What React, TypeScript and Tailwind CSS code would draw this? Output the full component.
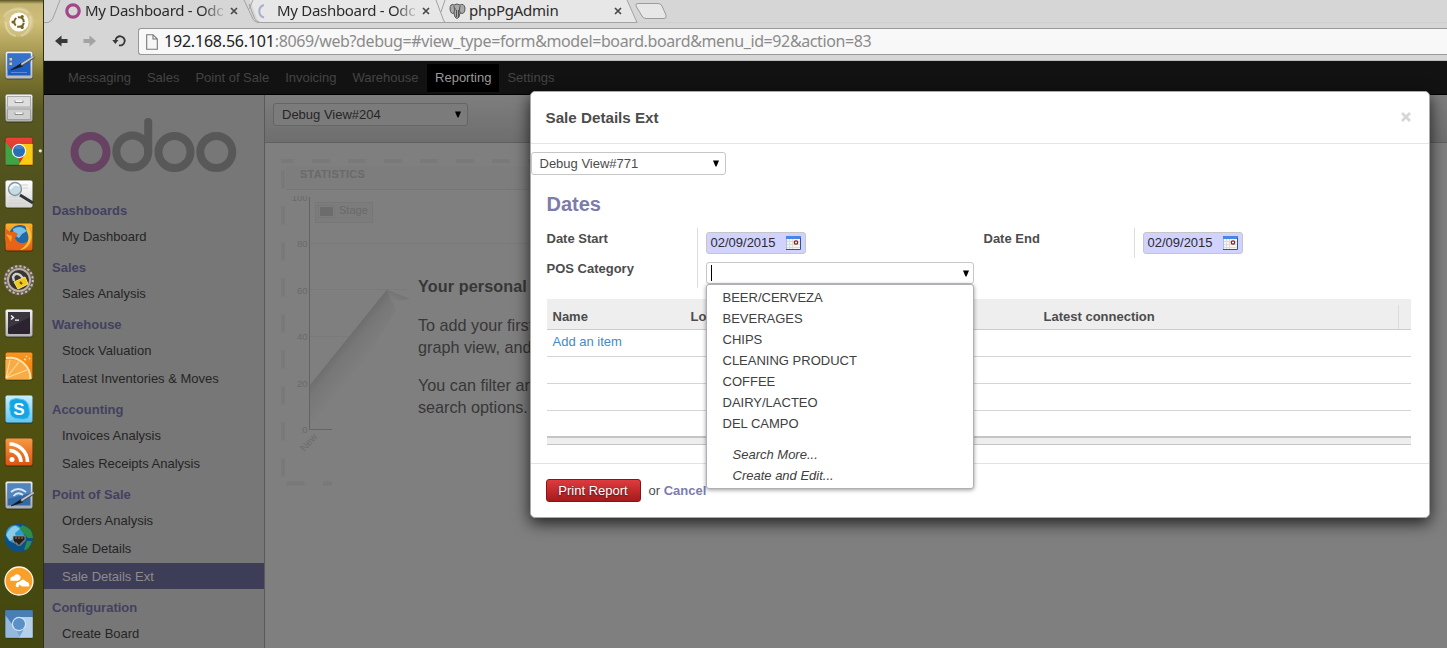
import React from 'react';

const chromeFont = "font-['Noto_Sans',sans-serif]";

function Tile({ id, from, to, stroke = '#00000055' }: { id: string; from: string; to: string; stroke?: string }) {
  return (
    <>
      <defs>
        <linearGradient id={id} x1="0" y1="0" x2="0" y2="1">
          <stop offset="0" stopColor={from} />
          <stop offset="1" stopColor={to} />
        </linearGradient>
      </defs>
      <rect x="-14" y="-13.5" width="28" height="28" rx="2.5" fill="#00000055" />
      <rect x="-13.7" y="-13.7" width="27.4" height="27.4" rx="2" fill={`url(#${id})`} stroke={stroke} strokeWidth=".6" />
    </>
  );
}

function Pen() {
  return (
    <>
      <path d="M-8 5 L2 -1.500 L4 1 Z" fill="#15181c" stroke="#15181c" strokeWidth=".6" />
      <path d="M3 -.500 L14 -7.5" stroke="#4b4f55" strokeWidth="3.2" strokeLinecap="round" />
      <path d="M3 -1 L14 -8" stroke="#c3c6ca" strokeWidth="1.8" strokeLinecap="round" />
    </>
  );
}

const launcher: React.ReactNode[] = [
  <>
    <circle r="15" fill="#e9dfb0" opacity=".3" />
    <path d="M-15 -5 C-12 -14 4 -15 9 -9 M11 -6 C14 4 8 12 2 14 M-3 14 C-10 13 -14 6 -13 0" fill="none" stroke="#f5edcf" strokeWidth="2" opacity=".35" />
    <circle r="9.6" fill="#fffef8" />
    <circle r="4.800" fill="none" stroke="#756528" strokeWidth="2" strokeDasharray="8.400 1.650" strokeDashoffset="-.800" />
    <circle cx="-6" r="1.6" fill="#756528" />
    <circle cx="3.2" cy="-5.4" r="1.6" fill="#756528" />
    <circle cx="3.2" cy="5.4" r="1.6" fill="#756528" />
  </>,
  <>
    <Tile id="pad1" from="#f3f3f3" to="#b7b9bd" />
    <rect x="-11.5" y="-11.5" width="23" height="22" fill="#1d5cc0" />
    <path d="M-11.5 -11.5 H11.5 V-3 Q0 -1 -11.5 5 Z" fill="#3472cc" />
    <path d="M-9.5 -7 h2.500 v2.500 h-2.500z M-9.5 -2.500 h2.500 v2.500 h-2.500z" fill="#e7c987" />
    <path d="M-8 7.5 h16" stroke="#5b8bd2" />
    <Pen />
  </>,
  <>
    <Tile id="cab" from="#f2f2f2" to="#b0b0b0" />
    <rect x="-11.5" y="-11.5" width="23" height="10.5" fill="#dedede" stroke="#aaaaaa" />
    <rect x="-11.5" y="1" width="23" height="10.5" fill="#cfcfcf" stroke="#a0a0a0" />
    <path d="M-4 -7.500 v2 h8 v-2 M-4 4.500 v2 h8 v-2" fill="#f5f5f5" stroke="#8d8d8d" />
  </>,
  <>
    <Tile id="chr" from="#ea4335" to="#d92b22" />
    <path d="M-13.5 -9 L-2 5 L2 13.7 H-13.5Z" fill="#3ea544" />
    <path d="M0 -7 H13.7 V13.7 H0 L6 3Z" fill="#fbcb13" />
    <circle r="7.2" fill="#f4f6f8" />
    <circle r="6" fill="#286fb4" />
    <path d="M-5 -3 A5.8 5.8 0 0 1 5 -3 Q0 -1 -5 -3" fill="#4384c0" />
    <circle cx="21.3" cy="-.2" r="1.6" fill="#e8e8dc" />
  </>,
  <>
    <Tile id="mag" from="#ffffff" to="#d4d4d4" />
    <path d="M-10 3 h12 M-10 6 h14 M-10 9 h17 M0 -9 h9 M4 -6 h5" stroke="#d0d0d0" />
    <path d="M1 1 L14 9" stroke="#303438" strokeWidth="3" />
    <circle cx="-4" cy="-5" r="6.5" fill="#c5dce6" stroke="#8a9499" strokeWidth="1.4" />
    <path d="M-9 -5 Q-5 -12 0 -8" fill="none" stroke="#f4fbff" strokeWidth="2" />
  </>,
  <>
    <Tile id="ffx" from="#fbb32d" to="#df5c12" />
    <circle cx="1" cy="-1" r="11" fill="#2269a9" />
    <path d="M-6 -8 Q2 -13 8 -6 L3 -3 L0 1 L-5 -2Z" fill="#76bfe8" />
    <path d="M-14 -9 L-9 -5 Q-5 -6 -1 -3 L-4 1 Q-2 7 5 6 Q10 5 11 0 Q10 13 -3 13 Q-12 12 -14 2Z" fill="#e66318" />
    <path d="M6 -13 Q16 -4 11 6 Q7 13 1 13 Q13 5 8 -5Z" fill="#fcbf32" />
    <path d="M-13 -3 L-7 -1 L-8 5" fill="#f9a526" />
  </>,
  <>
    <circle r="15.300" fill="#6a5f54" />
    <circle r="13.8" fill="none" stroke="#c9beb2" strokeWidth="2" strokeDasharray="2.2 2.13" />
    <circle r="11" fill="#383430" stroke="#b9aea2" strokeWidth="2" />
    <path d="M-5 1 L-6 -3 Q-4 -8 1 -5 L4 -2" fill="none" stroke="#cfcfcf" strokeWidth="2.4" />
    <path d="M-5 2 L6 -3 L9 4 L-1 9 Z" fill="#f0c91f" stroke="#ffe765" />
    <path d="M1 2 L3 4" stroke="#614d0a" strokeWidth="2" />
  </>,
  <>
    <Tile id="trm" from="#f2f2f2" to="#b5b5b5" />
    <rect x="-11" y="-11" width="22" height="22" rx="1" fill="#2b2430" />
    <path d="M-11 5 Q0 0 11 -6 V-11 H-11Z" fill="#3b3640" />
    <path d="M-8 -7.5 L-5.5 -5.5 L-8 -3.5 M-4 -2.8 H0" fill="none" stroke="#fff" strokeWidth="1.3" />
  </>,
  <>
    <Tile id="clem" from="#f8961e" to="#f07b08" />
    <path d="M-13.500 -6 A20 20 0 0 1 11.5 13.500 H-13.500Z" fill="#f9ac45" />
    <path d="M-13 -8 A21 21 0 0 1 11.5 13" fill="none" stroke="#ffe4ae" strokeWidth="2" />
    <path d="M-13 12 L-9 -6 M-13 12 L0 -4 M-13 12 L8 4" stroke="#ffdd9e" strokeWidth="1.1" />
    <path d="M5 -7 l2 1 M7 -10 l1 1 M10 -7 l1 -1" stroke="#ffdb98" strokeWidth="1.4" />
  </>,
  <>
    <Tile id="sky" from="#c9efff" to="#62c6f3" />
    <path d="M-9 -3 Q-11 -9 -5 -10 Q-2 -11 0 -10 Q9 -10 10 -1 Q12 5 9 9 Q5 11 1 10 Q-9 10 -9 2Q-10 0 -9 -3Z" fill="#15a5e5" stroke="#56c4f1" />
    <text x="0" y="6" textAnchor="middle" fontSize="17" fontWeight="700" fill="#fff" fontFamily="Liberation Sans, sans-serif">S</text>
  </>,
  <>
    <Tile id="rss" from="#f69a43" to="#da5410" />
    <circle cx="-7" cy="7.5" r="2.5" fill="#fff" />
    <path d="M-9.5 -1.500 A11.500 11.500 0 0 1 2 10 M-9.5 -8 A18 18 0 0 1 8.500 10" fill="none" stroke="#fff" strokeWidth="3.6" />
  </>,
  <>
    <Tile id="pad2" from="#ededed" to="#a8abb0" />
    <rect x="-11.5" y="-11.5" width="23" height="22" fill="#3469a7" />
    <path d="M-11.5 -11.5 H11.5 V-2 L-11.5 4Z" fill="#5085bd" />
    <path d="M-8 -3 Q-1 -9 7 -3 M-5.5 1 Q-1 -4 4 0" fill="none" stroke="#d7e7f4" strokeWidth="1.8" />
    <g transform="translate(0 6)"><Pen /></g>
  </>,
  <>
    <circle r="14.3" fill="#0c5088" />
    <circle cx="-4" cy="-4" r="9" fill="#2a9ad0" />
    <path d="M-13 -3 Q-8 -13 -3 -12 L1 -9 L-4 -5 L-3 -1 L-9 3Z" fill="#8acce8" />
    <path d="M3 -13 Q14 -10 14 0 L9 0 L4 -5 L1 -9Z M8 3 L13 3 Q10 12 5 12Z" fill="#2d8c48" />
    <path d="M-6 -2 H6 V3 H4 V5 H2 V7 H-2 V5 H-5 V3 H-6Z" fill="#251f1b" stroke="#a0a39b" strokeWidth=".8" />
    <path d="M-3 -1 V1 M0 -1 V1 M3 -1 V1" stroke="#a77f3a" />
  </>,
  <>
    <circle r="14" fill="#f9a02a" stroke="#fff7eb" strokeWidth="1.3" />
    <path d="M-8 -1 Q-8 -4 -5 -4 Q-2 -8 1 -4 Q1 -1 -2 -1 Z" fill="#fff" stroke="#fff" strokeWidth="1.4" strokeLinejoin="round" />
    <path d="M-3 5 Q-3 1 1 1 Q4 -3 7 1 Q10 1 10 5 H3 L0 3 L-1 6Z" fill="#fff" stroke="#fff" strokeWidth="1" strokeLinejoin="round" />
  </>,
  <>
    <Tile id="crm" from="#5c8fc2" to="#78a8d6" />
    <path d="M-13.5 -9 L-3 5 L1 13.7 H-13.5Z" fill="#94b9de" />
    <path d="M0 -7 H13.7 V13.7 H0 L6 3Z" fill="#b5d0ea" />
    <path d="M-13.7 -13.7 H13.7 V-7 H0 L-7 0 L-13.7 -9Z" fill="#497eb5" />
    <circle r="7.2" fill="#d5e4f3" />
    <circle r="6" fill="#5a90c7" />
  </>,
];

function Launcher() {
  return (
    <aside className="flex w-11 shrink-0 flex-col border-r border-[#2f3010] bg-[linear-gradient(to_bottom,#5b5424_0px,#c5b573_4px,#cfbe78_22px,#a89a52_52px,#7c7530_75px,#585822_110px,#50501c_200px,#525312_400px,#484b0d_520px,#444711_648px)]">
      {launcher.map((icon, i) => (
        <svg key={i} width="43" height="43" viewBox="-19 -22 43 43" className="shrink-0 overflow-visible">
          {icon}
        </svg>
      ))}
    </aside>
  );
}

function CloseMark() {
  return (
    <svg width="8" height="8" viewBox="0 0 8 8" className="shrink-0">
      <path d="M1 1 L7 7 M7 1 L1 7" stroke="#4a4a4a" strokeWidth="1.7" />
    </svg>
  );
}

function TabStrip() {
  return (
    <div className="grid h-[23px] w-full shrink-0 overflow-hidden">
      <svg width="1403" height="23" viewBox="44 0 1403 23" className="col-start-1 row-start-1">
        <path d="M637 22.5 H1447" stroke="#d0d0d0" />
        <path d="M250 0 L256 16 Q258 22.5 262 22.5 H444 L436 0 Z" fill="#e7e7e7" />
        <path d="M436 0 L442 16 Q444 22.500 448 22.500 H637 L627 0Z" fill="#e7e7e7" />
        <path d="M249 4 L254 17 Q256 22.5 261 22.5 H637 L627 0 M436 0 L442 16 Q443.500 21 445 22.500 M441 12 L445 0" fill="none" stroke="#a2a2a2" />
        <path d="M44 22.5 H46 Q50 22 52 18 L60 0 H244 L252 17 Q254 22 258 23 H46Z" fill="#d6d6d6" />
        <path d="M44 22.5 H48 Q51 22 53 18 L60 0 M244 0 L252 17 Q254 22.5 259 22.5 M249 9 L253 0" fill="none" stroke="#a2a2a2" />
        <path d="M638 3.5 H658 Q661 3.500 662 6 L666 15 Q667 18.500 664 18.500 H646 Q643 18.500 642 16 L636 6 Q635 3.500 638 3.500Z" fill="#e7e7e7" stroke="#9b9b9b" />
      </svg>
      <div className={`col-start-1 row-start-1 flex items-start text-[15px] text-[#2c2c2c] ${chromeFont}`}>
        <div className="flex h-[22px] w-[206px] items-center pl-[21px]">
          <svg width="16" height="16" viewBox="0 0 16 16" className="shrink-0"><circle cx="8" cy="8" r="6.2" fill="none" stroke="#a24689" strokeWidth="3.2" /></svg>
          <span className="ml-1 w-[138px] pb-px whitespace-nowrap leading-[19px] tracking-[-0.3px] [mask-image:linear-gradient(to_right,black_118px,transparent_142px)]">My Dashboard - Odo</span>
          <span className="ml-[7px]"><CloseMark /></span>
        </div>
        <div className="flex h-[22px] w-[193px] items-center pl-[6px]">
          <svg width="16" height="16" viewBox="0 0 16 16" className="shrink-0"><path d="M10 2 A6.500 6.500 0 0 0 10 14.500" transform="translate(-2 0)" fill="none" stroke="#a5b1cf" strokeWidth="2" /></svg>
          <span className="ml-[5px] w-[138px] pb-px whitespace-nowrap leading-[19px] tracking-[-0.3px] [mask-image:linear-gradient(to_right,black_118px,transparent_142px)]">My Dashboard - Odo</span>
          <span className="ml-[7px]"><CloseMark /></span>
        </div>
        <div className="flex h-[22px] items-center pl-[6px]">
          <svg width="17" height="17" viewBox="0 0 17 17" className="shrink-0">
            <path d="M5 2 Q1 0 1 6 Q2 12 5 10 L6 14 Q8 17 10 14 L11 10 Q16 12 16 5 Q15 0 11 2 Q8 0 5 2Z" fill="#aaa" stroke="#555" />
            <path d="M5 3 Q6 7 5 10 M11 3 Q10 7 11 10 M7.500 7 V14 M9.500 7 V14 M6 6 H7 M10 6 H11" fill="none" stroke="#555" />
          </svg>
          <span className="ml-[3px] w-[145px] pb-px leading-[19px] tracking-[-0.25px]">phpPgAdmin</span>
          <CloseMark />
        </div>
      </div>
    </div>
  );
}

function Toolbar() {
  return (
    <div className="flex h-[38px] shrink-0 items-center border-b border-[#bdbdbd]">
      <svg width="94" height="37" viewBox="44 23 94 37" className="shrink-0">
        <path d="M55 41 L61.500 35.500 V39 H67.500 V43 H61.500 V46.500Z" fill="#383838" />
        <path d="M96 41 L89.500 35.500 V39 H83.500 V43 H89.500 V46.500Z" fill="#a3a3a3" />
        <path d="M115.500 40.500 A4.600 4.600 0 1 1 119 45.300" fill="none" stroke="#383838" strokeWidth="1.800" />
        <path d="M112.300 40 H118.500 L115.300 44Z" fill="#383838" />
      </svg>
      <div className="flex h-[27px] flex-1 items-center overflow-hidden rounded-l-[3px] border border-r-0 border-[#989898] bg-[#f8f8f8] pl-[7px]">
        <svg width="12" height="16" viewBox="0 0 12 16" className="shrink-0">
          <path d="M.7 .7 H7 L11.300 5 V15.300 H.7Z M7 .7 V5 H11.300" fill="#f7f7f7" stroke="#777" strokeWidth="1.100" />
        </svg>
        <span className={`ml-[6px] whitespace-nowrap text-[16px] leading-[23px] tracking-[-0.39px] text-[#8b8b8b] ${chromeFont}`}>
          <span className="tracking-[-0.2px] text-[#222]">192.168.56.101</span>:8069/web?debug=#view_type=form&amp;model=board.board&amp;menu_id=92&amp;action=83
        </span>
      </div>
    </div>
  );
}

const menu = ['Messaging', 'Sales', 'Point of Sale', 'Invoicing', 'Warehouse', 'Reporting', 'Settings'];

const sections: { title: string; items: string[] }[] = [
  { title: 'Dashboards', items: ['My Dashboard'] },
  { title: 'Sales', items: ['Sales Analysis'] },
  { title: 'Warehouse', items: ['Stock Valuation', 'Latest Inventories & Moves'] },
  { title: 'Accounting', items: ['Invoices Analysis', 'Sales Receipts Analysis'] },
  { title: 'Point of Sale', items: ['Orders Analysis', 'Sale Details', 'Sale Details Ext'] },
  { title: 'Configuration', items: ['Create Board'] },
];

function Sidebar() {
  return (
    <nav className="flex w-[221px] shrink-0 flex-col overflow-hidden border-r border-[#58585d] bg-[#777777]">
      <div className="h-[97px] shrink-0">
        <svg width="220" height="97" viewBox="44 95 220 97" fill="none" strokeWidth="8">
          <circle cx="90.500" cy="152" r="16" stroke="#684262" />
          <g stroke="#585858">
            <circle cx="132.300" cy="151.500" r="16" />
            <path d="M148.200 122 V151" strokeLinecap="round" />
            <circle cx="174.500" cy="152" r="16" />
            <circle cx="216.300" cy="152" r="16" />
          </g>
        </svg>
      </div>
      {sections.map((s) => (
        <section key={s.title}>
          <h2 className="mt-[9px] mb-[2px] pl-2 text-[13px] leading-5 font-bold text-[#42415f]">{s.title}</h2>
          <ul className="flex flex-col gap-[2px]">
            {s.items.map((item) => (
              <li
                key={item}
                className={
                  item === 'Sale Details Ext'
                    ? 'h-[26px] bg-[#3e3d57] pl-[18px] leading-[28px] text-[#8c8c8c]'
                    : 'h-[26px] pl-[18px] leading-[28px] text-[#252525]'
                }
              >
                {item}
              </li>
            ))}
          </ul>
        </section>
      ))}
    </nav>
  );
}

function Caret() {
  return (
    <svg width="8" height="7" viewBox="0 0 8 7" className="shrink-0">
      <path d="M1 .5 H7 L4.500 6.500 H3.500Z" fill="#000" />
    </svg>
  );
}

function Chart() {
  return (
    <svg width="265" height="360" viewBox="265 143 265 360" className="col-start-1 row-start-1" fontFamily="Liberation Sans, sans-serif">
      <defs>
        <linearGradient id="area" x1="348" y1="337.500" x2="370" y2="355.500" gradientUnits="userSpaceOnUse">
          <stop offset="0" stopColor="#6e6e6e" />
          <stop offset=".3" stopColor="#777777" />
          <stop offset="1" stopColor="#7f7f7f" />
        </linearGradient>
        <linearGradient id="ridge" x1="397" y1="294" x2="394" y2="301" gradientUnits="userSpaceOnUse">
          <stop offset="0" stopColor="#757575" />
          <stop offset="1" stopColor="#7f7f7f" />
        </linearGradient>
        <clipPath id="axis">
          <rect x="290" y="196" width="30" height="250" />
        </clipPath>
      </defs>
      <rect x="286" y="166" width="244" height="23" fill="#7d7d7d" />
      <path d="M286 189.500 H530" stroke="#767676" />
      <path d="M281 161 H530" stroke="#797979" strokeWidth="4" strokeDasharray="18 18" strokeDashoffset="5" />
      <path d="M283 170.500 V477" stroke="#797979" strokeWidth="4" strokeDasharray="18 18" />
      <path d="M286.500 483.500 h18 M323 483.500 h9" stroke="#797979" strokeWidth="4" />
      <text x="300" y="178" fontSize="11" fontWeight="700" letterSpacing=".25" fill="#6a6a6a">STATISTICS</text>
      <path d="M310 243.500 H530 M310 289.500 H407 M310 336.500 H366" stroke="#7a7a7a" />
      <path d="M310 385 L387 289.500 L396 310 L325 430 H310Z" fill="url(#area)" />
      <path d="M387 289.500 L410 299 L392 302Z" fill="url(#ridge)" />
      <path d="M309.500 197 V429.500 H332" fill="none" stroke="#646464" />
      <g fontSize="9.500" fill="#6a6a6a" textAnchor="end" clipPath="url(#axis)">
        <text x="307.500" y="200.500">100</text>
        <text x="307.500" y="246.500">80</text>
        <text x="307.500" y="293.500">60</text>
        <text x="307.500" y="339.500">40</text>
        <text x="307.500" y="386.500">20</text>
        <text x="307.500" y="432.500">0</text>
      </g>
      <text transform="translate(304.500 452) rotate(-48)" fontSize="10" fill="#6c6c6c">New</text>
      <rect x="315.500" y="202.500" width="57" height="20" fill="#7c7c7c" stroke="#777777" />
      <rect x="318.500" y="205.500" width="16" height="12" fill="#7d7d7d" stroke="#777777" />
      <rect x="320" y="207" width="13" height="9" fill="#6c6c6c" />
      <text x="339" y="214" fontSize="11" fill="#6a6a6a">Stage</text>
    </svg>
  );
}

function DateInput() {
  return (
    <div className="flex h-[22px] w-[100px] items-center rounded-[3px] border border-[#c6c6c6] bg-[#d2d2ff] pl-[3.500px] text-[#2b2b2b]">
      <span className="w-[75.500px]">02/09/2015</span>
      <svg width="15" height="14" viewBox="0 0 15 14" className="shrink-0">
        <rect width="15" height="14" fill="#f5f5f3" />
        <path d="M0 5.500 H14 M0 8.500 H14 M0 11.500 H14 M3.500 3 V13 M6.500 3 V13" stroke="#dcdcd8" />
        <rect width="15" height="3" fill="#4a86e8" />
        <path d="M14.500 2 V13.500 H0" fill="none" stroke="#2b5590" />
        <path d="M.5 3 V13" stroke="#a9bfdf" />
        <circle cx="10" cy="6.500" r="1.700" fill="#fff" stroke="#8d1515" strokeWidth="1.200" />
      </svg>
    </div>
  );
}

const categories = ['BEER/CERVEZA', 'BEVERAGES', 'CHIPS', 'CLEANING PRODUCT', 'COFFEE', 'DAIRY/LACTEO', 'DEL CAMPO'];

function CategoryField() {
  return (
    <div className="relative mt-2 w-[268px]">
      <div className="flex h-[22px] items-center justify-between rounded-[3px] border border-[#c6c6c6] bg-white pr-[3px] pl-1">
        <span className="h-4 w-px bg-black" />
        <Caret />
      </div>
      <ul className="absolute top-[22px] left-0 z-10 h-[205px] w-[268px] rounded-[3px] border border-[#afafb6] bg-white pt-[2px] text-[#404040] shadow-[0_1px_4px_rgba(0,0,0,0.4)]">
        {categories.map((c) => (
          <li key={c} className="h-[21px] pl-[15.500px] leading-[21px]">{c}</li>
        ))}
        <li className="mt-[10px] h-[21px] pl-[25.500px] leading-[21px] italic">Search More...</li>
        <li className="h-[21px] pl-[25.500px] leading-[21px] italic">Create and Edit...</li>
      </ul>
    </div>
  );
}

function Dialog() {
  return (
    <div className="absolute top-[30px] left-[486px] flex h-[427px] w-[900px] flex-col rounded-[5px] border border-[#aaaaaa] bg-white text-[#4c4c4c] shadow-[0_5px_16px_rgba(0,0,0,0.75)]">
      <header className="flex h-[52px] shrink-0 items-center justify-between border-b border-[#e5e5e5] pr-[18px] pl-[14.500px]">
        <h1 className="pt-px text-[15.200px] font-bold">Sale Details Ext</h1>
        <svg width="10" height="10" viewBox="0 0 10 10" className="mb-[2px]"><path d="M1 1 L9 9 M9 1 L1 9" stroke="#d6d6d6" strokeWidth="2.700" /></svg>
      </header>
      <div className="mt-2 flex h-[23px] w-[195px] shrink-0 items-center justify-between rounded-[3px] border border-[#c6c6c6] pr-[5px] pl-[7.500px]">
        <span>Debug View#771</span>
        <Caret />
      </div>
      <div className="flex h-[288px] shrink-0 flex-col pr-[18px] pl-4">
        <h2 className="mt-[16px] -ml-[.5px] h-[26px] text-[20px] leading-[26px] font-bold text-[#7c7bad]">Dates</h2>
        <div className="mt-[11px] flex h-[60px]">
          <div className="flex w-[151px] shrink-0 flex-col border-r border-[#dddddd] font-bold leading-[22px]">
            <span className="-ml-[.5px] h-[30px]">Date Start</span>
            <span className="-ml-[.5px]">POS Category</span>
          </div>
          <div className="ml-2 w-[278px] shrink-0 pt-1">
            <DateInput />
            <CategoryField />
          </div>
          <div className="h-[30px] w-[151px] border-r border-[#dddddd] font-bold leading-[22px]"><span className="-ml-[.5px]">Date End</span></div>
          <div className="ml-2 pt-1"><DateInput /></div>
        </div>
        <div className="mt-[11px] flex h-[31px] shrink-0 items-end border-b border-[#cccccc] bg-[#eeeeee] font-bold">
          <span className="w-[138px] pl-[5.500px] leading-[25px]">Name</span>
          <span className="w-[353px] pl-[5.500px] leading-[25px]">Login</span>
          <span className="w-[360px] pl-[5.500px] leading-[25px]">Latest connection</span>
          <span className="h-6 w-px bg-[#dddddd]" />
        </div>
        <div className="h-[27px] shrink-0 border-b border-[#d5d5d5] pl-[5.500px] leading-6 text-[#428bca]">Add an item</div>
        <div className="h-[27px] shrink-0 border-b border-[#d5d5d5]" />
        <div className="h-[27px] shrink-0 border-b border-[#d5d5d5]" />
        <div className="mt-[25px] h-[9px] shrink-0 border-t-2 border-b border-[#c5c5c5] bg-[#eeeeee]" />
      </div>
      <footer className="flex flex-1 items-start border-t border-[#e2e2e2] pt-[15px] pl-[15px]">
        <button className="h-[23px] w-[95px] rounded-[3px] border border-[#8a1414] bg-linear-to-b from-[#de3b3d] to-[#a61a1c] pr-px text-[13px] leading-[21px] text-white [text-shadow:0_1px_2px_rgba(0,0,0,0.6)]">Print Report</button>
        <span className="ml-[7.500px] leading-[23px]">or <b className="text-[#7c7bad]">Cancel</b></span>
      </footer>
    </div>
  );
}

export default function App() {
  return (
    <div className="flex h-[648px] w-[1447px] overflow-hidden bg-[#d6d6d6] font-['Liberation_Sans',sans-serif] text-[13px]">
      <Launcher />
      <div className="flex min-w-0 flex-1 flex-col">
        <TabStrip />
        <Toolbar />
        <div className="relative flex min-h-0 flex-1 flex-col overflow-hidden">
          <nav className="flex h-[34px] shrink-0 items-center border-b border-black bg-[#121212] pl-4 text-[#444444]">
            {menu.map((m) => (
              <span
                key={m}
                className={m === 'Reporting' ? 'ml-[.6px] bg-black px-2 leading-7 text-[#9a9a9a]' : 'px-2 leading-7'}
              >
                {m}
              </span>
            ))}
          </nav>
          <div className="flex min-h-0 flex-1">
            <Sidebar />
            <main className="flex min-w-0 flex-1 flex-col bg-[#7f7f7f]">
              <div className="flex h-12 shrink-0 items-start border-b border-[#606060] bg-linear-to-b from-[#7e7e7e] to-[#6e6e6e] pt-2 pl-2">
                <div className="flex h-[23px] w-[195px] items-center justify-between rounded-[3px] border border-[#656565] bg-[#7b7b7b] pr-[5px] pl-2 text-[#262626]">
                  <span>Debug View#204</span>
                  <Caret />
                </div>
              </div>
              <div className="grid grid-cols-[265px] justify-start">
                <Chart />
                <div className="col-start-1 row-start-1 w-[265px] pt-[132px] pl-[153px] text-[16.200px] leading-[22px] whitespace-nowrap text-[#373737]">
                  <p className="font-bold tracking-[0.1px]">Your personal</p>
                  <p className="mt-[17px]">To add your first<br />graph view, and</p>
                  <p className="mt-4">You can filter and<br />search options.</p>
                </div>
              </div>
            </main>
          </div>
          <Dialog />
        </div>
      </div>
    </div>
  );
}
